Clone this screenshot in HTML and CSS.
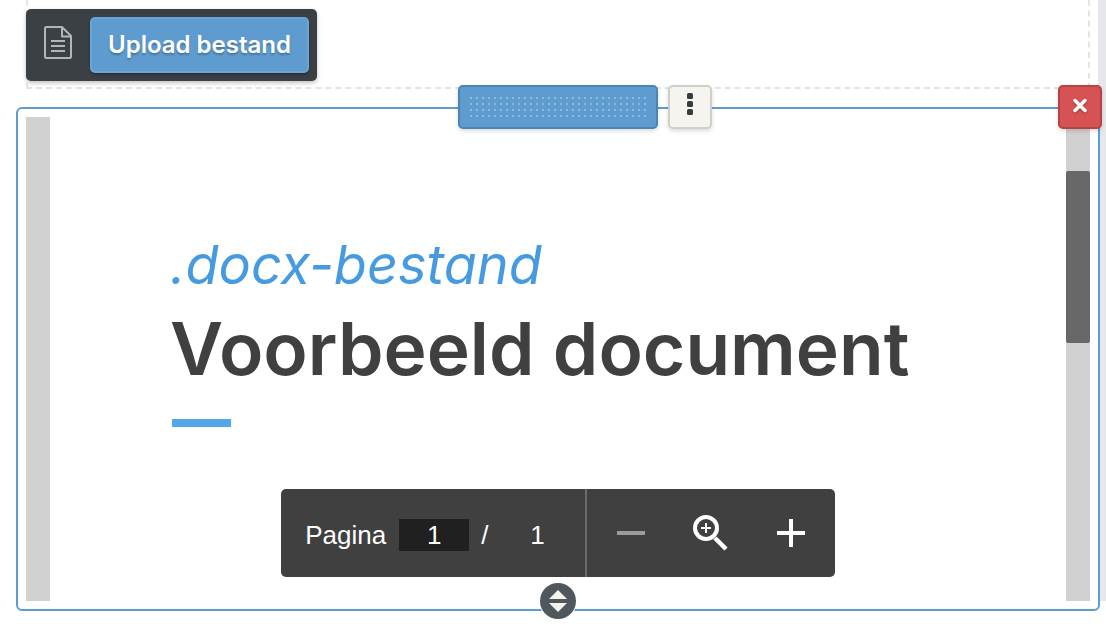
FILE: index.html
```
<!DOCTYPE html>
<html lang="nl">
<head>
  <meta charset="UTF-8">
  <meta name="viewport" content="width=device-width, initial-scale=1">
  <title>Voorbeeld document</title>
  <link rel="stylesheet" href="styles.css">
</head>
<body>
<main class="page">
  <section class="dropzone">
    <div class="upload-bar">
      <svg class="file-icon" width="28" height="33" viewBox="0 0 28 33" fill="none" stroke="#b3b5b6" stroke-width="2" stroke-linejoin="round">
        <path d="M1 2.500Q1 1 2.500 1H18L27 10V30.500Q27 32 25.500 32H2.500Q1 32 1 30.500Z"/>
        <path d="M18 1V10.500H27"/>
        <path d="M7 15H21M7 20H21M7 25H21"/>
      </svg>
      <button type="button" class="upload-btn">Upload bestand</button>
    </div>
  </section>

  <section class="block">
    <div class="block-tools">
      <button type="button" class="drag-handle" aria-label="Verplaatsen"><span class="grip"></span></button>
      <button type="button" class="menu-btn" aria-label="Opties">
        <svg width="6" height="22" viewBox="0 0 6 22" fill="#363c40">
          <rect width="6" height="6" rx="1.500"/>
          <rect y="8" width="6" height="6" rx="1.500"/>
          <rect y="16" width="6" height="6" rx="1.500"/>
        </svg>
      </button>
    </div>
    <button type="button" class="close-btn" aria-label="Verwijderen">
      <svg width="14" height="15" viewBox="0 0 14 15" stroke="#fff" stroke-width="3.500" stroke-linecap="round">
        <path d="M2 2.500L12 12.500M12 2.500L2 12.500"/>
      </svg>
    </button>

    <div class="viewer">
      <div class="gutter"></div>
      <article class="document">
        <p class="subtitle">.docx-bestand</p>
        <h1 class="title">Voorbeeld document</h1>
        <div class="accent"></div>

        <div class="controls">
          <div class="pager">
            <label for="page">Pagina</label>
            <input type="text" id="page" class="page-input" value="1">
            <span class="slash">/</span>
            <span class="total">1</span>
          </div>
          <div class="zoom">
            <button type="button" class="zoom-btn" aria-label="Uitzoomen" disabled>
              <svg width="28" height="28" viewBox="0 0 28 28" fill="#9b9b9b"><path d="M0 12H28V16H0Z"/></svg>
            </button>
            <button type="button" class="zoom-btn" aria-label="Zoom herstellen">
              <svg width="36" height="36" viewBox="0 0 36 36" fill="none" stroke="#fff">
                <circle cx="13" cy="13" r="11" stroke-width="4"/>
                <path d="M13 8V18M8 13H18" stroke-width="2"/>
                <path d="M22 23L33 34" stroke-width="4.500"/>
              </svg>
            </button>
            <button type="button" class="zoom-btn" aria-label="Inzoomen">
              <svg width="28" height="28" viewBox="0 0 28 28" fill="#fff"><path d="M12 0H16V12H28V16H16V28H12V16H0V12H12Z"/></svg>
            </button>
          </div>
        </div>
      </article>
      <div class="gutter scroll-track"><div class="scroll-thumb"></div></div>
    </div>

    <button type="button" class="resize-btn" aria-label="Hoogte aanpassen">
      <svg width="18" height="22" viewBox="0 0 18 22" fill="#f6f4ef">
        <path d="M9 0L18 9H0Z"/>
        <path d="M0 13H18L9 22Z"/>
      </svg>
    </button>
  </section>
</main>
</body>
</html>
```
FILE: styles.css
```
* {
  box-sizing: border-box;
}

body {
  margin: 0;
  min-height: 100vh;
  background-color: #fff;
  font-family: Inter, "Open Sans", sans-serif;
}

button {
  padding: 0;
  border: none;
  cursor: pointer;
  display: flex;
  align-items: center;
  justify-content: center;
}

svg {
  display: block;
}

.page {
  display: flow-root;
  padding-left: 16px;
  border-right: 8px solid #e6e7ea;
}

/* upload area */
.dropzone {
  margin: 0 8px 18px 10px;
  padding: 9px 0 6px;
  border: 2px dashed #e4e4e4;
  border-top: none;
}

.upload-bar {
  display: inline-flex;
  align-items: center;
  gap: 18px;
  margin-left: -2px;
  padding: 8px 8px 8px 18px;
  vertical-align: top;
  border-radius: 5px;
  background-color: #3b4045;
  box-shadow: 0 2px 4px rgba(0, 0, 0, 0.25);
}

.file-icon {
  margin-bottom: 5px;
}

.upload-btn {
  height: 56px;
  padding: 0 16px 2px;
  border: 2px solid #69a5d8;
  border-radius: 5px;
  background-color: #5e9cd0;
  box-shadow: 0 2px 3px rgba(0, 0, 0, 0.25);
  color: #fff;
  font-family: inherit;
  font-size: 24px;
  font-weight: 600;
  text-shadow: 0 2px 2px rgba(0, 0, 0, 0.25);
}

/* selected block */
.block {
  position: relative;
  margin: 0 -2px -10px 0;
  padding: 8px;
  border: 2px solid #5e9cd0;
  border-radius: 6px;
  background-color: #fff;
}

.block-tools {
  position: absolute;
  top: -24px;
  left: calc(50% - 100px);
  display: flex;
  gap: 10px;
}

.drag-handle,
.menu-btn,
.close-btn {
  height: 44px;
  border: 2px solid #4a84b5;
  border-radius: 5px;
  box-shadow: 0 2px 4px rgba(0, 0, 0, 0.15);
}

.drag-handle {
  width: 200px;
  background-color: #5e9cd0;
  cursor: move;
}

.grip {
  width: 176px;
  height: 20px;
  background-image: conic-gradient(at 2px 2px, transparent 75%, #8fbade 0);
  background-size: 6px 6px;
}

.menu-btn {
  width: 44px;
  padding-bottom: 6px;
  border-color: #d0cfca;
  background-color: #f6f4ef;
}

.close-btn {
  position: absolute;
  top: -24px;
  right: -4px;
  width: 44px;
  padding-bottom: 4px;
  border-color: #b54245;
  background-color: #d75252;
}

.close-btn svg {
  filter: drop-shadow(0 1px 1px rgba(0, 0, 0, 0.3));
}

.resize-btn {
  position: absolute;
  bottom: -10px;
  left: calc(50% - 18px);
  width: 36px;
  height: 36px;
  border-radius: 50%;
  background-color: #50585e;
  box-shadow: 0 0 0 1px #fff;
}

/* document viewer */
.viewer {
  display: flex;
}

.gutter {
  width: 24px;
  background-color: #d1d1d1;
}

.scroll-track {
  padding-top: 54px;
}

.scroll-thumb {
  height: 172px;
  border-radius: 2px;
  background-color: #686868;
}

.document {
  flex: 1;
  display: flex;
  flex-direction: column;
  padding: 116px 0 24px;
}

.subtitle,
.title {
  margin: 0 0 0 120px;
}

.subtitle {
  color: #459ae0;
  font-size: 54px;
  font-style: italic;
  line-height: 64px;
}

.title {
  color: #404040;
  font-size: 73px;
  font-weight: 600;
  line-height: 104px;
}

.accent {
  width: 59px;
  height: 8px;
  margin: 18px 0 62px 122px;
  background-color: #52a7ea;
}

.controls {
  align-self: center;
  display: flex;
  height: 88px;
  border-radius: 5px;
  background-color: #404040;
  color: #fff;
  font-family: "Liberation Sans", Arial, sans-serif;
  font-size: 26px;
}

.pager {
  display: flex;
  align-items: center;
  padding: 4px 40px 0 24px;
  border-right: 2px solid #6b6b6b;
}

.page-input {
  width: 70px;
  height: 32px;
  margin: 0 12px 0 13px;
  padding: 0;
  border: none;
  background-color: #202020;
  color: inherit;
  font: inherit;
  text-align: center;
}

.total {
  margin-left: 42px;
}

.zoom {
  display: flex;
  align-items: center;
  gap: 48px;
  padding: 0 30px;
}

.zoom-btn {
  background: none;
}
```
